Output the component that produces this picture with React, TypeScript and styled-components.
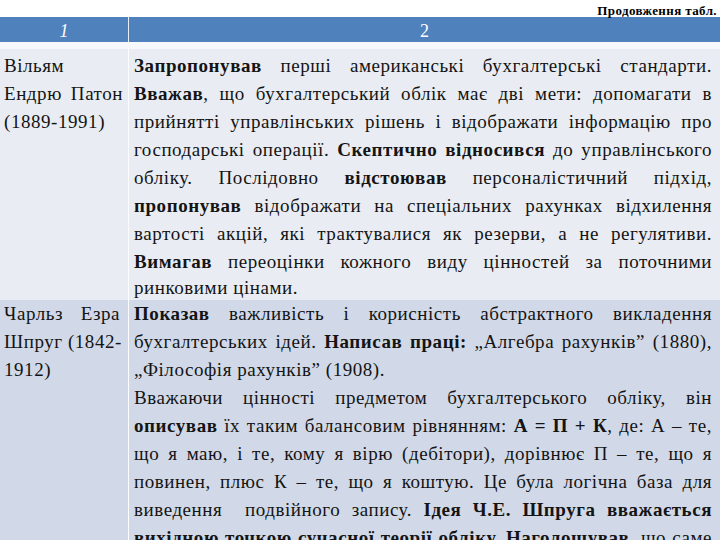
import styled, { createGlobalStyle } from "styled-components";

const GlobalStyle = createGlobalStyle`
  html, body {
    margin: 0;
    padding: 0;
    background: #ffffff;
    overflow: hidden;
  }
`;

type Part = { t: string; b?: boolean };
type LineData = { parts: Part[]; justify?: boolean };

const row1Name: LineData[] = [
  { parts: [{ t: "Вільям" }] },
  { justify: true, parts: [{ t: "Ендрю Патон" }] },
  { parts: [{ t: "(1889-1991)" }] },
];

const row1Text: LineData[] = [
  { justify: true, parts: [{ t: "Запропонував", b: true }, { t: " перші американські бухгалтерські стандарти." }] },
  { justify: true, parts: [{ t: "Вважав", b: true }, { t: ", що бухгалтерський облік має дві мети: допомагати в" }] },
  { justify: true, parts: [{ t: "прийнятті управлінських рішень і відображати інформацію про" }] },
  { justify: true, parts: [{ t: "господарські операції. " }, { t: "Скептично відносився", b: true }, { t: " до управлінського" }] },
  { justify: true, parts: [{ t: "обліку. Послідовно " }, { t: "відстоював", b: true }, { t: " персоналістичний підхід," }] },
  { justify: true, parts: [{ t: "пропонував", b: true }, { t: " відображати на спеціальних рахунках відхилення" }] },
  { justify: true, parts: [{ t: "вартості акцій, які трактувалися як резерви, а не регулятиви." }] },
  { justify: true, parts: [{ t: "Вимагав", b: true }, { t: " переоцінки кожного виду цінностей за поточними" }] },
  { parts: [{ t: "ринковими цінами." }] },
];

const row2Name: LineData[] = [
  { justify: true, parts: [{ t: "Чарльз Езра" }] },
  { justify: true, parts: [{ t: "Шпруг (1842-" }] },
  { parts: [{ t: "1912)" }] },
];

const row2Text: LineData[] = [
  { justify: true, parts: [{ t: "Показав", b: true }, { t: " важливість і корисність абстрактного викладення" }] },
  { justify: true, parts: [{ t: "бухгалтерських ідей. " }, { t: "Написав праці:", b: true }, { t: " „Алгебра рахунків” (1880)," }] },
  { parts: [{ t: "„Філософія рахунків” (1908)." }] },
  { justify: true, parts: [{ t: "Вважаючи цінності предметом бухгалтерського обліку, він" }] },
  { justify: true, parts: [{ t: "описував", b: true }, { t: " їх таким балансовим рівнянням: " }, { t: "А = П + К", b: true }, { t: ", де: А – те," }] },
  { justify: true, parts: [{ t: "що я маю, і те, кому я вірю (дебітори), дорівнює П – те, що я" }] },
  { justify: true, parts: [{ t: "повинен, плюс К – те, що я коштую. Це була логічна база для" }] },
  { justify: true, parts: [{ t: "виведення  подвійного запису. " }, { t: "Ідея Ч.Е. Шпруга вважається", b: true }] },
  { justify: true, parts: [{ t: "вихідною точкою сучасної теорії обліку. Наголошував", b: true }, { t: ", що саме" }] },
];

const Page = styled.div`
  width: 720px;
  height: 540px;
  overflow: hidden;
  font-family: "Liberation Serif", "Times New Roman", serif;
  color: #141414;
`;

const Caption = styled.div`
  position: relative;
  z-index: 1;
  height: 17px;
  padding-right: 3px;
  text-align: right;
  font-size: 13px;
  font-weight: bold;
  letter-spacing: 0.4px;
  line-height: 21px;
  color: #000;
`;

const Grid = styled.div`
  display: grid;
  grid-template-columns: 128px 1fr;
`;

const HeaderRow = styled(Grid)`
  height: 25px;
  background: #4f81bd;
`;

const HeaderCell = styled.div<{ $italic?: boolean; $divided?: boolean }>`
  display: flex;
  align-items: center;
  justify-content: center;
  padding-top: 3px;
  color: #ffffff;
  font-size: 18px;
  font-style: ${(p) => (p.$italic ? "italic" : "normal")};
  border-left: ${(p) => (p.$divided ? "1px solid #e6eef8" : "none")};
`;

const Band = styled.div`
  height: 7px;
  background: #f6f8fb;
`;

const BodyRow = styled(Grid)<{ $bg: string; $top: number }>`
  background: ${(p) => p.$bg};
  padding-top: ${(p) => p.$top}px;
`;

const Cell = styled.div<{ $divided?: boolean; $left: number; $right: number }>`
  padding-left: ${(p) => p.$left}px;
  padding-right: ${(p) => p.$right}px;
  border-left: ${(p) => (p.$divided ? "1px solid #fbfcfe" : "none")};
  margin-top: ${(p) => (p.$divided ? "-4px" : "0")};
  padding-top: ${(p) => (p.$divided ? "4px" : "0")};
`;

const Line = styled.div<{ $justify?: boolean; $tight?: boolean }>`
  font-size: 19px;
  letter-spacing: 0.55px;
  line-height: ${(p) => (p.$tight ? "24px" : "28px")};
  height: ${(p) => (p.$tight ? "24px" : "28px")};
  text-align: ${(p) => (p.$justify ? "justify" : "left")};
  text-align-last: ${(p) => (p.$justify ? "justify" : "left")};
  white-space: pre;
`;

const Strong = styled.b`
  font-weight: bold;
`;

const Lines = ({ lines, tightLast }: { lines: LineData[]; tightLast?: boolean }) => (
  <>
    {lines.map((line, i) => (
      <Line key={i} $justify={line.justify} $tight={tightLast && i === lines.length - 1}>
        {line.parts.map((p, j) => (p.b ? <Strong key={j}>{p.t}</Strong> : <span key={j}>{p.t}</span>))}
      </Line>
    ))}
  </>
);

export default function App() {
  return (
    <Page>
      <GlobalStyle />
      <Caption>Продовження табл.</Caption>
      <HeaderRow>
        <HeaderCell $italic>1</HeaderCell>
        <HeaderCell $divided>2</HeaderCell>
      </HeaderRow>
      <Band />
      <BodyRow $bg="#e9edf3" $top={3}>
        <Cell $left={4} $right={5}>
          <Lines lines={row1Name} />
        </Cell>
        <Cell $divided $left={5} $right={8}>
          <Lines lines={row1Text} tightLast />
        </Cell>
      </BodyRow>
      <BodyRow $bg="#d1d9e8" $top={0}>
        <Cell $left={4} $right={8}>
          <Lines lines={row2Name} />
        </Cell>
        <Cell $divided $left={5} $right={8}>
          <Lines lines={row2Text} />
        </Cell>
      </BodyRow>
    </Page>
  );
}
